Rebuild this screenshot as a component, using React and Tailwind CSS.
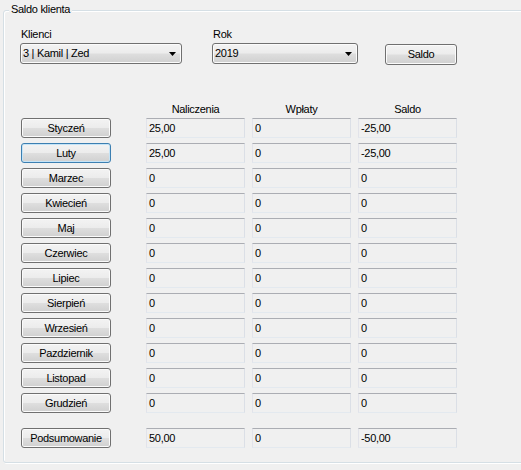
import React from "react";

const months = [
  ["Styczeń", "25,00", "0", "-25,00"],
  ["Luty", "25,00", "0", "-25,00"],
  ["Marzec", "0", "0", "0"],
  ["Kwiecień", "0", "0", "0"],
  ["Maj", "0", "0", "0"],
  ["Czerwiec", "0", "0", "0"],
  ["Lipiec", "0", "0", "0"],
  ["Sierpień", "0", "0", "0"],
  ["Wrzesień", "0", "0", "0"],
  ["Pazdziernik", "0", "0", "0"],
  ["Listopad", "0", "0", "0"],
  ["Grudzień", "0", "0", "0"],
];

function Btn({ children, className = "", focused = false }) {
  return (
    <div
      className={
        "flex items-center justify-center rounded-[3px] border bg-[linear-gradient(to_bottom,#f3f3f3_0%,#ececec_48%,#dedede_52%,#d0d0d0_100%)] leading-[13px] " +
        (focused
          ? "border-[#3c7fb1] shadow-[inset_0_0_0_1px_#c5e4f7]"
          : "border-[#707070] shadow-[inset_0_0_0_1px_#fbfbfb]") +
        " " +
        className
      }
    >
      {children}
    </div>
  );
}

function Field({ value }) {
  return (
    <div className="flex h-[20px] w-[99px] items-center border border-t-[#abadb3] border-l-[#e2e3ea] border-r-[#dbdfe6] border-b-[#e3e9ef] bg-[#f0f0f0] pl-[2px] leading-[13px]">
      {value}
    </div>
  );
}

function Combo({ value, width }) {
  return (
    <div
      className={
        "mt-[2px] flex h-[21px] items-center justify-between rounded-[3px] border border-[#707070] bg-[linear-gradient(to_bottom,#f3f3f3_0%,#ececec_48%,#dedede_52%,#d0d0d0_100%)] pl-[2px] pr-[5px] shadow-[inset_0_0_0_1px_#fbfbfb] leading-[13px] " +
        width
      }
    >
      <span>{value}</span>
      <svg width="7" height="4" viewBox="0 0 7 4">
        <polygon points="0,0 7,0 3.5,4" fill="#000" />
      </svg>
    </div>
  );
}

function Row({ label, a, b, c, focused }) {
  return (
    <div className="flex h-[20px]">
      <Btn className="h-[20px] w-[90px]" focused={focused}>
        {label}
      </Btn>
      <div className="ml-[35px] flex gap-[7px]">
        <Field value={a} />
        <Field value={b} />
        <Field value={c} />
      </div>
    </div>
  );
}

export default function App() {
  return (
    <div
      className="h-[470px] w-[521px] overflow-hidden bg-[#f0f0f0] pl-[3px] pt-[10px] text-[11px] tracking-[-0.3px] text-black"
      style={{ fontFamily: '"Liberation Sans", Arial, sans-serif' }}
    >
      <div className="relative h-[453px] w-[560px] rounded-[3px] border border-[#d5dfe5] shadow-[inset_1px_1px_0_#ffffff,1px_1px_0_#ffffff]">
        <span className="absolute left-[5px] top-[-8px] bg-[#f0f0f0] px-[2px] leading-[13px]">
          Saldo klienta
        </span>

        <div className="flex pl-[16px] pt-[17px]">
          <div className="w-[162px]">
            <div className="h-[13px] pl-[1px] leading-[13px]">Klienci</div>
            <Combo value="3 | Kamil | Zed" width="w-[162px]" />
          </div>
          <div className="ml-[30px] w-[146px]">
            <div className="h-[13px] pl-[1px] leading-[13px]">Rok</div>
            <Combo value="2019" width="w-[146px]" />
          </div>
          <Btn className="ml-[27px] mt-[16px] h-[21px] w-[72px]">Saldo</Btn>
        </div>

        <div className="pl-[17px] pt-[38px]">
          <div className="flex h-[13px] leading-[13px]">
            <div className="ml-[125px] flex gap-[7px]">
              <div className="w-[99px] text-center">Naliczenia</div>
              <div className="w-[99px] text-center">Wpłaty</div>
              <div className="w-[99px] text-center">Saldo</div>
            </div>
          </div>

          <div className="mt-[2px] flex flex-col gap-[5px]">
            {months.map(([l, a, b, c]) => (
              <Row key={l} label={l} a={a} b={b} c={c} focused={l === "Luty"} />
            ))}
          </div>

          <div className="mt-[15px]">
            <Row label="Podsumowanie" a="50,00" b="0" c="-50,00" />
          </div>
        </div>
      </div>
    </div>
  );
}
